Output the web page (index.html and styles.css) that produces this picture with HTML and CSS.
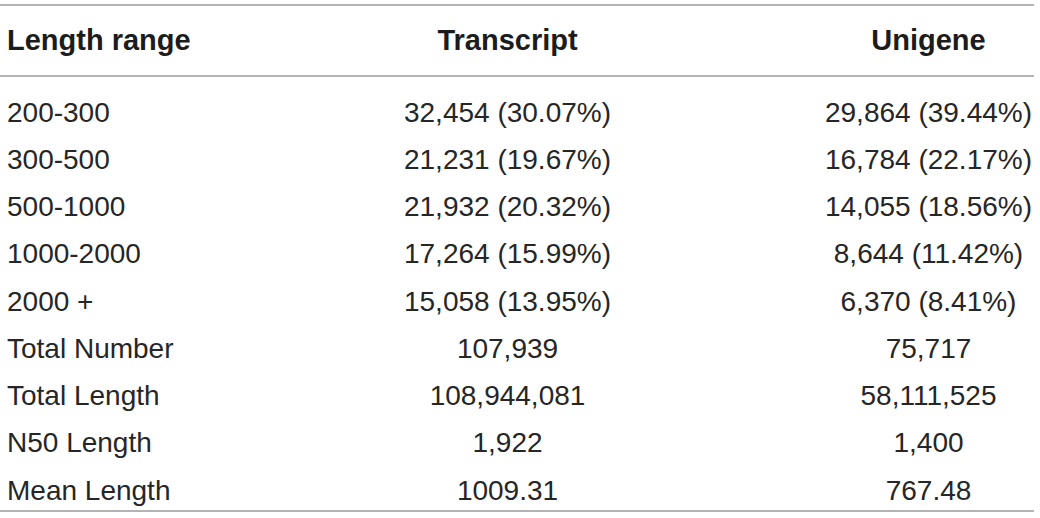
FILE: index.html
```html
<!DOCTYPE html>
<html>
<head>
<meta charset="utf-8">
<link rel="stylesheet" href="styles.css">
</head>
<body>
<div class="table">
  <div class="row head">
    <div class="c1">Length range</div>
    <div class="c2">Transcript</div>
    <div class="c3">Unigene</div>
  </div>
  <div class="body">
    <div class="row"><div class="c1">200-300</div><div class="c2">32,454 (30.07%)</div><div class="c3">29,864 (39.44%)</div></div>
    <div class="row"><div class="c1">300-500</div><div class="c2">21,231 (19.67%)</div><div class="c3">16,784 (22.17%)</div></div>
    <div class="row"><div class="c1">500-1000</div><div class="c2">21,932 (20.32%)</div><div class="c3">14,055 (18.56%)</div></div>
    <div class="row"><div class="c1">1000-2000</div><div class="c2">17,264 (15.99%)</div><div class="c3">8,644 (11.42%)</div></div>
    <div class="row"><div class="c1">2000 +</div><div class="c2">15,058 (13.95%)</div><div class="c3">6,370 (8.41%)</div></div>
    <div class="row"><div class="c1">Total Number</div><div class="c2">107,939</div><div class="c3">75,717</div></div>
    <div class="row"><div class="c1">Total Length</div><div class="c2">108,944,081</div><div class="c3">58,111,525</div></div>
    <div class="row"><div class="c1">N50 Length</div><div class="c2">1,922</div><div class="c3">1,400</div></div>
    <div class="row"><div class="c1">Mean Length</div><div class="c2">1009.31</div><div class="c3">767.48</div></div>
  </div>
</div>
</body>
</html>
```

FILE: styles.css
```css
html, body {
  margin: 0;
  padding: 0;
  background: #ffffff;
}
body {
  font-family: "Liberation Sans", Arial, sans-serif;
  color: #262626;
  font-size: 28px;
}
.table {
  width: 1034px;
  margin-top: 4px;
  border-top: 2px solid #b4b4b4;
  border-bottom: 2px solid #b4b4b4;
}
.row {
  display: grid;
  grid-template-columns: 192px 631px 211px;
  white-space: nowrap;
}
.head {
  height: 69px;
  line-height: 69px;
  font-weight: bold;
  font-size: 29px;
  color: #1c1c1c;
  border-bottom: 2px solid #b4b4b4;
}
.body {
  padding-top: 7.7px;
}
.body .row {
  height: 47.25px;
  box-sizing: border-box;
  padding-top: 8px;
  line-height: 39.25px;
}
.c1 {
  padding-left: 7px;
  text-align: left;
}
.c2, .c3 {
  text-align: center;
}
```
